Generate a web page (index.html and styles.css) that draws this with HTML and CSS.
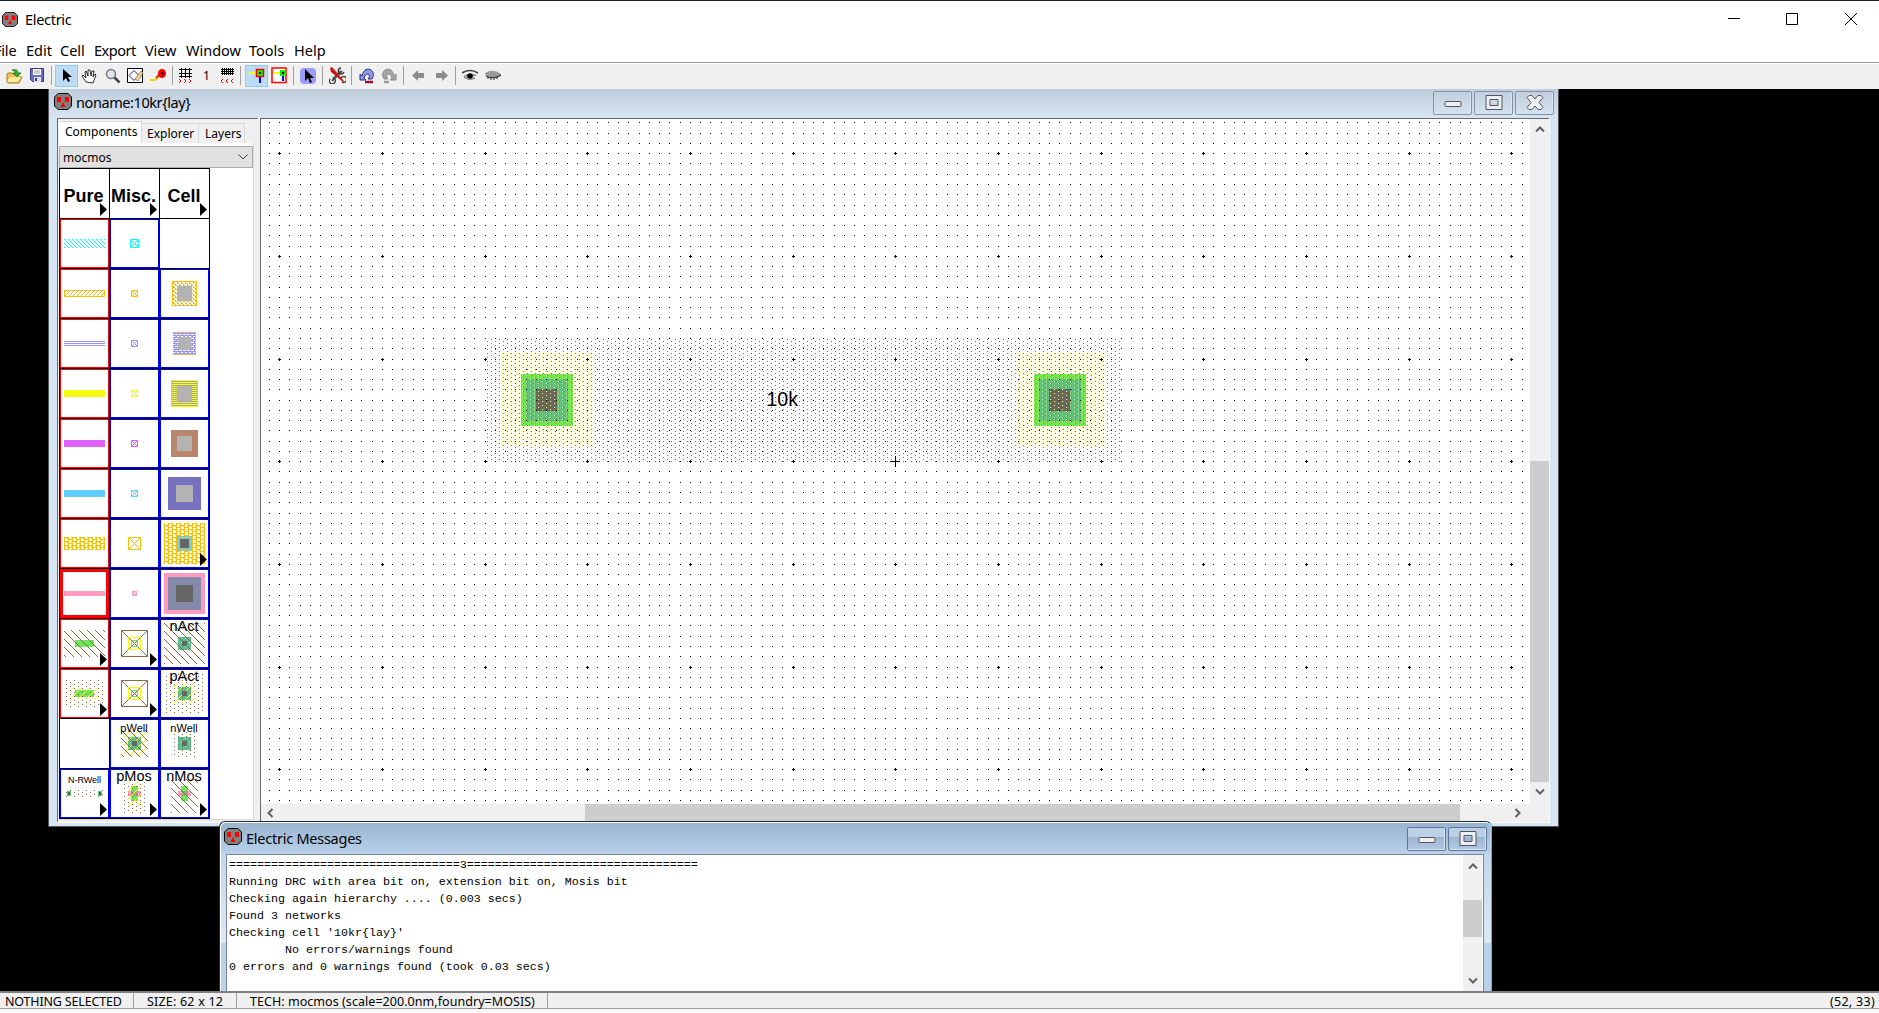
FILE: index.html
```html
<!DOCTYPE html>
<html lang="en">
<head>
<meta charset="utf-8">
<title>Electric</title>
<link rel="stylesheet" href="styles.css">
</head>
<body>
<svg class="defs" aria-hidden="true">
  <defs>
    <symbol id="logo" viewBox="0 0 18 17"><path d="M4 .5h10l3.5 3.5v9L14 16.500H4L.5 13V4z" fill="#808080" stroke="#000"/><path d="M3 4h4v5H3zM11 4h4v5h-4zM8 10h2v2h1v2H7v-2h1z" fill="#f00"/></symbol>
    <symbol id="up" viewBox="0 0 10 8"><path d="M1 6.500L5 2.500L9 6.500" fill="none" stroke="#606060" stroke-width="2"/></symbol>
    <symbol id="arrow" viewBox="0 0 7 13"><path d="M0 0l7 6.500L0 13z"/></symbol>
    <pattern id="hCyan" width="4" height="4" patternUnits="userSpaceOnUse"><path d="M0 0h1v1h1v1h1v1h1v1h-1v-1h-1v-1h-1v-1h-1z" fill="#00ffff"/></pattern>
    <pattern id="hOr" width="4" height="4" patternUnits="userSpaceOnUse"><path d="M3 0h1v1h-1v1h-1v1h-1v1h-1v-1h1v-1h1v-1h1z" fill="#ffbe06"/></pattern>
    <pattern id="chk" width="4" height="4" patternUnits="userSpaceOnUse"><path d="M0 0h1v1h-1zM2 2h1v1h-1zM3 0h1v1h-1zM1 2h1v1h-1z" fill="#ffbe06"/><path d="M1 1h1v1h-1zM3 3h1v1h-1z" fill="#2ee8d8"/></pattern>
    <pattern id="brk" width="4" height="4" patternUnits="userSpaceOnUse"><path d="M0 0h4v1h-4zM0 2h4v1h-4zM0 1h1v1h-1zM2 3h1v1h-1z" fill="#9696ff"/><path d="M3 1h1v1h-1z" fill="#ffbe06"/></pattern>
    <pattern id="tile" x="4" y="2" width="8" height="4" patternUnits="userSpaceOnUse"><path d="M0 0h1v4H0zM4 0h1v4H4zM0 0h4v1H0zM4 2h4v1H4zM3 1h1v1h-1zM7 0h1v1h-1z" fill="#ffbe06"/></pattern>
    <pattern id="hBr" width="8" height="8" patternUnits="userSpaceOnUse"><path d="M0 0h1v1h1v1h1v1h1v1h1v1h1v1h1v1h1v1h-1v-1h-1v-1h-1v-1h-1v-1h-1v-1h-1v-1h-1v-1h-1z" fill="#8b6a43"/></pattern>
    <pattern id="hYe" width="8" height="8" patternUnits="userSpaceOnUse"><path d="M7 0h1v1h-1v1h-1v1h-1v1h-1v1h-1v1h-1v1h-1v1h-1v-1h1v-1h1v-1h1v-1h1v-1h1v-1h1v-1h1z" fill="#ff0"/></pattern>
    <pattern id="dBr" x="2" y="1" width="8" height="4" patternUnits="userSpaceOnUse"><path d="M0 0h1v1H0zM4 2h1v1H4z" fill="#8b6a43"/></pattern>
    <pattern id="dYe" width="8" height="8" patternUnits="userSpaceOnUse"><path d="M1 3h1v1H1zM5 7h1v1H5z" fill="#ff0"/></pattern>
    <symbol id="via" viewBox="0 0 49 49"><path d="M21.500 21.500h6v6h-6z" fill="none" stroke="currentColor"/><path d="M22 22h1v1h-1zM23 23h1v1h-1zM24 24h1v1h-1zM25 25h1v1h-1zM26 26h1v1h-1zM26 22h1v1h-1zM25 23h1v1h-1zM23 25h1v1h-1zM22 26h1v1h-1z" fill="currentColor"/></symbol>
    <symbol id="act" viewBox="0 0 49 49"><g fill="none"><path d="M11.500 11.500h26v26h-26zM12 12l25 25M37 12L12 37" stroke="#8b6a43"/><path d="M18.500 18.500h12v12h-12z" stroke="#ff0"/><path d="M21.500 21.500h6v6h-6z" stroke="#6be65a"/></g></symbol>
    <symbol id="tea" viewBox="0 0 49 49"><path d="M18 18h13v13H18z" fill="#5cbf8d"/><path d="M22 22h5v5h-5z" fill="#666"/></symbol>
    <pattern id="rBr" x="226" y="220" width="8" height="4" patternUnits="userSpaceOnUse"><path d="M0 2h1v1H0zM4 0h1v1H4z" fill="#8a6a52"/></pattern>
    <pattern id="rYe" x="225" y="220" width="8" height="4" patternUnits="userSpaceOnUse"><path d="M0 2h1v1H0zM4 0h1v1H4z" fill="#ff0"/></pattern>
  </defs>
</svg>
<div class="app">
  <header class="titlebar">
    <svg class="logo" width="16" height="15"><use href="#logo"/></svg>
    <span class="app-name">Electric</span>
    <svg class="caption" width="131" height="14" fill="none" stroke="#000"><path d="M0 5.500h12M58.500.5h11v11h-11z"/><path d="M117 0l12 12M129 0L117 12"/></svg>
  </header>
  <nav class="menu"><span class="m1">File</span><span class="m2">Edit</span><span class="m3">Cell</span><span class="m4">Export</span><span class="m5">View</span><span class="m6">Window</span><span class="m7">Tools</span><span class="m8">Help</span></nav>
  <div class="toolbar">
    <i class="btn"><svg width="17" height="16"><path d="M1 14V6l1-1h4l1 1h5v3l4 0-3 6H2z" fill="#f0c25a" stroke="#a87a1c"/><path d="M4 9h11l-3 5H1z" fill="#ffe9a0"/><path d="M6 2c4-1 6 0 6 3h3l-4 4-4-4h2c0-2-1-2-3-3z" fill="#3fae29" stroke="#1c7414" stroke-width=".8"/></svg></i>
    <i class="btn"><svg width="15" height="15"><path d="M.5.5h13v13h-11l-2-2z" fill="#6a6fc0" stroke="#34387e"/><path d="M3 1h8v6H3z" fill="#fff"/><path d="M4 3h6M4 5h6" stroke="#99a"/><path d="M4 9h7v5H4z" fill="#dde"/><path d="M5 10h2v3H5z" fill="#34387e"/></svg></i>
    <b class="sep"></b>
    <i class="btn on"><svg width="12" height="17"><path d="M2 2v12l3-3 2 4 2-1-2-4h4z"/></svg></i>
    <i class="btn"><svg width="17" height="16"><path d="M5 14L1 8l1-1 3 3-1-6 1-1 2 5 0-6 2 0 1 6 1-5 2 0-1 6 2-3 1 1-3 8z" fill="#fff" stroke="#000" stroke-width=".8"/></svg></i>
    <i class="btn"><svg width="16" height="16"><circle cx="6" cy="6" r="4.500" fill="#dce6ee" stroke="#777" stroke-width="1.500"/><path d="M9.500 9.500l5 5" stroke="#444" stroke-width="2.500"/></svg></i>
    <i class="btn"><svg width="17" height="16"><path d="M.5.5h15v14H.5z" fill="#fff" stroke="#000"/><path d="M2 7.500l5-5 5 5-5 5z" fill="none" stroke="#22227c"/><path d="M8 11l6-8 2 2-5 8z" fill="#efd394" stroke="#8b6a43" stroke-width=".7"/></svg></i>
    <i class="btn"><svg width="17" height="15"><path d="M0 12h5l4-3" stroke="#e8d800" stroke-width="2" fill="none"/><path d="M6 10l4-4" stroke="#c33" stroke-width="2"/><ellipse cx="12" cy="5.500" rx="4" ry="4.500" fill="#f00"/><path d="M11 4h3v3h-3z" fill="#300"/></svg></i>
    <b class="sep narrow"></b>
    <i class="btn small"><svg width="15" height="16"><path d="M1 1.500h13M1 5.500h13M1 8.500h13M3.500 0v10M7.500 0v10M11.500 0v10" stroke="#000"/><path d="M1 11l2 2-2 2M6 11l2 2-2 2M11 11l2 2-2 2" stroke="#f00" fill="none"/></svg></i>
    <i class="btn small one">1</i>
    <i class="btn small"><svg width="15" height="16"><path d="M1 1.500h13M1 3.500h13M1 5.500h13M2.500 0v7M4.500 0v7M6.500 0v7M8.500 0v7M10.500 0v7M12.500 0v7" stroke="#000"/><path d="M3 11l-2 2 2 2M8 11l-2 2 2 2M13 11l-2 2 2 2" stroke="#f00" fill="none"/></svg></i>
    <b class="sep wide"></b>
    <i class="btn on"><svg width="16" height="16"><path d="M0 5h7" stroke="#ff0" stroke-width="2"/><path d="M11 9v6" stroke="#00f" stroke-width="2"/><path d="M7.500 1.500h7v7h-7z" fill="#0f0" stroke="#f00" stroke-width="1.500"/><path d="M10 4h2v2h-2z"/></svg></i>
    <i class="btn"><svg width="17" height="17"><path d="M1 1h14v14.500H1z" fill="#fff" stroke="#f00" stroke-width="1.500"/><path d="M2 6h7" stroke="#ff0" stroke-width="2"/><path d="M12 8v6" stroke="#00f" stroke-width="2"/><path d="M9 3h6v6H9z" fill="#0e0"/><path d="M11 5h2v2h-2z"/></svg></i>
    <b class="sep"></b>
    <i class="btn"><svg width="17" height="16"><rect width="16" height="16" rx="4" fill="#9a9cf8"/><path d="M5 1v12l3-3 2 5 2-1-2-4h4z"/></svg></i>
    <b class="sep"></b>
    <i class="btn"><svg width="17" height="17"><path d="M3 14L13 4M4 12l8-8" stroke="#555" stroke-width="2"/><path d="M1 12a3 3 0 1 0 3-1M12 1a3 3 0 1 0 3 4M12 11a3 3 0 1 1 1 4" fill="none" stroke="#333" stroke-width="1.300"/><path d="M1 1l2-1 6 7 6 7-1 1-7-6-5-4z" fill="#d01010"/></svg></i>
    <b class="sep"></b>
    <i class="btn"><svg width="16" height="16"><path d="M1 6v6h6L5 10c1-4 4-5 5-3 1 1 0 3-1 4h4c2-3 2-8-2-9.500C7 0 4 3 3 8z" fill="#8d98e6" stroke="#2a3278"/><path d="M6 14h8" stroke="#a01030" stroke-width="2.500"/></svg></i>
    <i class="btn"><svg width="16" height="16"><path d="M14 6v6H8l2-2C9 6 6 5 5 7c-1 1 0 3 1 4H2C0 8 0 3 4 1.500 8 0 11 3 12 8z" fill="#a4a4a4" stroke="#8a8a8a"/><path d="M2 14h5" stroke="#999" stroke-width="2.500"/></svg></i>
    <b class="sep"></b>
    <i class="btn"><svg width="13" height="13"><path d="M0 6.500L6 1v3h6v5H6v3z" fill="#8c8c8c"/></svg></i>
    <i class="btn"><svg width="13" height="13"><path d="M13 6.500L7 1v3H1v5h6v3z" fill="#8c8c8c"/></svg></i>
    <b class="sep"></b>
    <i class="btn"><svg width="17" height="13"><path d="M0 4q8-5 16 0" fill="none" stroke="#444" stroke-width="1.500"/><path d="M1 7q7-4 14-1-6 5-14 1z" fill="#999"/><circle cx="8" cy="7" r="2.800"/><path d="M2 8q5 4 11 1" fill="none" stroke="#555"/></svg></i>
    <i class="btn"><svg width="17" height="13"><path d="M0 4q8-5 16 1v2q-8 4-15 0z" fill="#999"/><path d="M1 7q7 4 15-1M3 8v2M6 9v2M9 9v2M12 8v2" fill="none" stroke="#222"/></svg></i>
  </div>

  <main class="desktop">
    <section class="win cell-win">
      <div class="win-title">
        <svg class="logo" width="18" height="17"><use href="#logo"/></svg>
        <span class="t1">noname:10kr{lay}</span>
        <div class="wbtns">
          <i class="wb"><svg width="18" height="16"><rect x="1" y="6.500" width="16" height="5" rx="1" fill="#eee" stroke="#535666"/></svg></i>
          <i class="wb"><svg width="18" height="16"><path d="M1 .5h16v14H1zM5 4.500v6h8v-6z" fill="#eee" fill-rule="evenodd" stroke="#535666"/></svg></i>
          <i class="wb"><svg width="18" height="16"><path d="M3 .5h3L9 4l3-3.500h3l2 2L13 7.500l4 5-2 2h-3L9 11l-3 3.500H3l-2-2 4-5-4-5z" fill="#eee" stroke="#535666"/></svg></i>
        </div>
      </div>
      <div class="win-body">
        <aside class="side">
          <div class="tabs"><span class="tab cur">Components</span><span class="tab ex">Explorer</span><span class="tab ly">Layers</span></div>
          <div class="pane">
            <div class="combo"><span>mocmos</span><svg width="10" height="6"><path d="M.5.5L5 5 9.500.5" fill="none" stroke="#444"/></svg></div>
            <div class="palette">
              <div class="c head"><svg viewBox="0 0 49 49"><text x="23.500" y="33">Pure</text><use href="#arrow" x="40" y="34" width="7" height="13"/></svg></div>
              <div class="c head"><svg viewBox="0 0 49 49"><text x="23.500" y="33">Misc.</text><use href="#arrow" x="40" y="34" width="7" height="13"/></svg></div>
              <div class="c head"><svg viewBox="0 0 49 49"><text x="24" y="33">Cell</text><use href="#arrow" x="40" y="34" width="7" height="13"/></svg></div>

              <div class="c r"><svg viewBox="0 0 49 49"><path d="M4 20h41v9H4z" fill="url(#hCyan)"/></svg></div>
              <div class="c b"><svg viewBox="0 0 49 49"><path d="M20.500 20.500h8v8h-8zM21 21l7 7M28 21l-7 7" fill="none" stroke="#0ff"/></svg></div>
              <div class="c"></div>

              <div class="c r"><svg viewBox="0 0 49 49"><path d="M4.500 21.500h40v6h-40z" fill="url(#hOr)" stroke="#ffbe06"/></svg></div>
              <div class="c b"><svg viewBox="0 0 49 49" color="#ffbe06"><use href="#via"/></svg></div>
              <div class="c b"><svg viewBox="0 0 49 49"><path d="M12.500 12.500h24v24h-24z" fill="url(#chk)" stroke="#ffbe06"/><path d="M17 17h15v15H17z" fill="#b3b3b3"/></svg></div>

              <div class="c r"><svg viewBox="0 0 49 49"><path d="M4 22.500h41M4 24.500h41M4 26.500h41" stroke="#9696ff"/></svg></div>
              <div class="c b"><svg viewBox="0 0 49 49" color="#9696ff"><use href="#via"/></svg></div>
              <div class="c b"><svg viewBox="0 0 49 49"><path d="M13 13h23v23H13z" fill="url(#brk)"/><path d="M13 13.500h23M13 35.500h23" stroke="#ecb568"/><path d="M18 18h13v13H18z" fill="#b3b3b3"/></svg></div>

              <div class="c r"><svg viewBox="0 0 49 49"><path d="M4 21h41v7H4z" fill="#f7fb14"/></svg></div>
              <div class="c b"><svg viewBox="0 0 49 49" color="#f7fb14"><use href="#via"/></svg></div>
              <div class="c b"><svg viewBox="0 0 49 49"><path d="M11 11h27v27H11z" fill="#a9a9a0"/><path d="M24.500 11v27" stroke="#f7fb14" stroke-width="27" stroke-dasharray="1 1"/><path d="M17 17h15v15H17z" fill="#b3b3b3"/></svg></div>

              <div class="c r"><svg viewBox="0 0 49 49"><path d="M4 21h41v7H4z" fill="#e05fff"/></svg></div>
              <div class="c b"><svg viewBox="0 0 49 49" color="#e05fff"><use href="#via"/></svg></div>
              <div class="c b"><svg viewBox="0 0 49 49"><path d="M11 11h27v27H11z" fill="#b9866c"/><path d="M17 17h15v15H17z" fill="#b3b3b3"/></svg></div>

              <div class="c r"><svg viewBox="0 0 49 49"><path d="M4 21h41v7H4z" fill="#5fceff"/></svg></div>
              <div class="c b"><svg viewBox="0 0 49 49" color="#5fceff"><use href="#via"/></svg></div>
              <div class="c b"><svg viewBox="0 0 49 49"><path d="M8 8h33v33H8z" fill="#7672c0"/><path d="M16 16h17v17H16z" fill="#b3b3b3"/></svg></div>

              <div class="c r"><svg viewBox="0 0 49 49"><path d="M4 18h41v13H4z" fill="url(#tile)"/></svg></div>
              <div class="c b"><svg viewBox="0 0 49 49"><path d="M18.500 18.500h12v12h-12zM19 19l11 11M30 19L19 30" fill="none" stroke="#ffbe06"/></svg></div>
              <div class="c b"><svg viewBox="0 0 49 49"><path d="M4 4h41v41H4z" fill="url(#tile)"/><path d="M17 17h15v15H17z" fill="#5fceff"/><path d="M17 17h15v15H17z" fill="url(#tile)" opacity=".6"/><path d="M20 20h9v9h-9z" fill="#666"/><use href="#arrow" x="40" y="34" width="7" height="13"/></svg></div>

              <div class="c r sel"><svg viewBox="0 0 49 49"><path d="M4 22h41v5H4z" fill="#ff9bc0"/></svg></div>
              <div class="c b"><svg viewBox="0 0 49 49"><path d="M22 22h5v5h-5z" fill="#ff9bc0"/><path d="M24 23h1v1h-1zM23 24h1v1h-1zM25 24h1v1h-1zM24 25h1v1h-1z" fill="#fff"/></svg></div>
              <div class="c b"><svg viewBox="0 0 49 49"><path d="M4 4h41v41H4z" fill="#ff9bc0"/><path d="M8 8h33v33H8z" fill="#858aaa"/><path d="M16 16h17v17H16z" fill="#666"/></svg></div>

              <div class="c r"><svg viewBox="0 0 49 49"><path d="M15 21h19v7H15z" fill="#6be65a"/><path d="M4 11h41v27H4z" fill="url(#hBr)"/><path d="M11 18h27v13H11z" fill="url(#dYe)"/><use href="#arrow" x="40" y="34" width="7" height="13"/></svg></div>
              <div class="c b"><svg viewBox="0 0 49 49"><use href="#act"/><use href="#arrow" x="40" y="34" width="7" height="13"/></svg></div>
              <div class="c b"><svg viewBox="0 0 49 49"><use href="#tea"/><path d="M4 4h41v41H4z" fill="url(#hBr)"/><path d="M15 15h19v19H15z" fill="url(#dYe)"/><path d="M22 22h5v5h-5z" fill="#666"/><text class="l" x="24" y="12">nAct</text></svg></div>

              <div class="c r"><svg viewBox="0 0 49 49"><path d="M15 21h19v7H15z" fill="#6be65a"/><path d="M6 11h38v27H6z" fill="url(#dBr)"/><path d="M11 18h27v13H11z" fill="url(#hYe)"/><use href="#arrow" x="40" y="34" width="7" height="13"/></svg></div>
              <div class="c b"><svg viewBox="0 0 49 49"><use href="#act"/><use href="#arrow" x="40" y="34" width="7" height="13"/></svg></div>
              <div class="c b"><svg viewBox="0 0 49 49"><use href="#tea"/><path d="M5 5h39v40H5z" fill="url(#dBr)"/><path d="M14 14h21v21H14z" fill="url(#hYe)"/><path d="M22 22h5v5h-5z" fill="#666"/><text class="l" x="24" y="12">pAct</text></svg></div>

              <div class="c"></div>
              <div class="c b"><svg viewBox="0 0 49 49"><use href="#tea"/><path d="M11 11h27v27H11z" fill="url(#hBr)"/><path d="M13 13h23v23H13z" fill="url(#hYe)"/><path d="M22 22h5v5h-5z" fill="#666"/><text class="m" x="24" y="13">pWell</text></svg></div>
              <div class="c b"><svg viewBox="0 0 49 49"><use href="#tea"/><path d="M13 13h23v25H13z" fill="url(#dBr)"/><path d="M15 15h19v19H15z" fill="url(#dYe)"/><path d="M22 22h5v5h-5z" fill="#666"/><text class="m" x="24" y="13">nWell</text></svg></div>

              <div class="c b"><svg viewBox="0 0 49 49"><path d="M6 21h38v8H6z" fill="url(#dBr)"/><path d="M7 22h4v5H7zM38 22h4v5h-4z" fill="#5fd070"/><path d="M8 23h2v3H8zM39 23h2v3h-2z" fill="#555"/><text class="s" x="24.500" y="14">N-RWell</text><use href="#arrow" x="40" y="34" width="7" height="13"/></svg></div>
              <div class="c b"><svg viewBox="0 0 49 49"><path d="M21 17h7v15h-7z" fill="#6be65a"/><path d="M18 22h13v5H18z" fill="#ff9bc0"/><path d="M21 22h7v5h-7z" fill="#8fb07a"/><path d="M13 10h23v34H13z" fill="url(#dBr)"/><path d="M17 12h15v25H17z" fill="url(#hYe)"/><text class="l" x="24" y="12">pMos</text><use href="#arrow" x="40" y="34" width="7" height="13"/></svg></div>
              <div class="c b"><svg viewBox="0 0 49 49"><path d="M21 17h7v15h-7z" fill="#6be65a"/><path d="M18 22h13v5H18z" fill="#ff9bc0"/><path d="M21 22h7v5h-7z" fill="#8fb07a"/><path d="M11 10h27v34H11z" fill="url(#hBr)"/><path d="M18 14h13v21H18z" fill="url(#dYe)"/><text class="l" x="24" y="12">nMos</text><use href="#arrow" x="40" y="34" width="7" height="13"/></svg></div>
            </div>
          </div>
        </aside>
        <div class="editor">
          <svg class="canvas" width="1269" height="685">
            <path d="M225 220h635v124H225z" fill="url(#rBr)"/>
            <path d="M238 234h95v93h-95zM754 234h91v93h-91z" fill="url(#rYe)"/>
            <path d="M260 255h52v52h-52zM773 255h52v52h-52z" fill="#6be65a"/>
            <path d="M265 260h42v42h-42zM778 260h42v42h-42z" fill="#5cbf8d"/>
            <path d="M275 270h21v22h-21zM788 270h21v22h-21z" fill="#666"/>
            <path d="M260 255h52v52h-52zM773 255h52v52h-52z" fill="url(#rBr)"/>
            <path d="M260 255h52v52h-52zM773 255h52v52h-52z" fill="url(#rYe)"/>
            <path id="grid"/>
            <path d="M629 342.500h10M634.500 337v11" stroke="#000"/>
            <text x="505.500" y="287">10k</text>
          </svg>
          <div class="vbar"><svg width="10" height="8"><use href="#up"/></svg><b></b><svg class="dn" width="10" height="8"><use href="#up"/></svg></div>
          <div class="hbar"><svg class="lf" width="10" height="8"><use href="#up"/></svg><b></b><svg class="rt" width="10" height="8"><use href="#up"/></svg></div>
        </div>
      </div>
    </section>

    <section class="win msg-win">
      <div class="win-title">
        <svg class="logo" width="18" height="17"><use href="#logo"/></svg>
        <span class="t2">Electric Messages</span>
        <div class="wbtns">
          <i class="wb"><svg width="18" height="16"><rect x="1" y="6.500" width="16" height="5" rx="1" fill="#eee" stroke="#535666"/></svg></i>
          <i class="wb"><svg width="18" height="16"><path d="M1 .5h16v14H1zM5 4.500v6h8v-6z" fill="#eee" fill-rule="evenodd" stroke="#535666"/></svg></i>
        </div>
      </div>
      <div class="msg-body">
<pre>=================================3=================================
Running DRC with area bit on, extension bit on, Mosis bit
Checking again hierarchy .... (0.003 secs)
Found 3 networks
Checking cell '10kr{lay}'
        No errors/warnings found
0 errors and 0 warnings found (took 0.03 secs)</pre>
        <div class="vbar"><svg width="10" height="8"><use href="#up"/></svg><b></b><svg class="dn" width="10" height="8"><use href="#up"/></svg></div>
      </div>
    </section>
  </main>
  <footer class="status"><span class="s1">NOTHING SELECTED</span><span class="s2">SIZE: 62 x 12</span><span class="s3">TECH: mocmos (scale=200.0nm,foundry=MOSIS)</span><span class="s4">(52, 33)</span></footer>
</div>
<script src="grid.js"></script>
</body>
</html>
```
FILE: grid.js
```js
// Dot grid of the layout editor: a dot per unit, a bold one every ten units.
(function () {
  var step = 10.267, d = '';
  for (var j = -3; j <= 63; j++) {
    var y = Math.round(34.2 + j * step);
    if (y > 683) break;
    for (var i = -1; i <= 121; i++) {
      var x = Math.round(18.2 + i * step);
      d += 'M' + x + ' ' + y + 'h1v1h-1z';
      if (i % 10 === 0 && j % 10 === 0) {
        d += 'M' + (x - 1) + ' ' + y + 'h3v1h-3zM' + x + ' ' + (y - 1) + 'h1v3h-1z';
      }
    }
  }
  document.getElementById('grid').setAttribute('d', d);
})();
```
FILE: styles.css
```css
* { box-sizing: border-box; }
body { margin: 0; overflow: hidden; font-family: "Noto Sans", sans-serif; color: #000; }
svg { display: block; flex: none; }
.defs { position: absolute; width: 0; height: 0; }
.app { display: flex; flex-direction: column; width: 1879px; height: 1013px; background: #fff; }

.titlebar { height: 38px; border-top: 1px solid #17212e; display: flex; align-items: flex-start; padding: 11px 20px 0 2px; }
.app-name { font-size: 14.5px; line-height: 18px; margin: -2px auto 0 7px; letter-spacing: -0.3px; }
.caption { margin: 1px 0 0; }
.menu { height: 24px; display: flex; font-size: 14.5px; line-height: 25px; white-space: nowrap; }
.menu span { flex: none; }
.m1 { width: 32px; margin-left: -6px; letter-spacing: -.2px; }
.m2 { width: 34px; }
.m3 { width: 34px; }
.m4 { width: 51px; letter-spacing: -.5px; }
.m5 { width: 41px; letter-spacing: -.1px; }
.m6 { width: 63px; }
.m7 { width: 45px; }

.toolbar { height: 27px; border-top: 1px solid #a0a0a0; background: #f0f0f0; display: flex; align-items: center; padding: 0 0 1px 3px; box-shadow: inset 0 1px #fff; }
.btn { width: 23px; height: 22px; display: flex; align-items: center; justify-content: center; font-style: normal; flex: none; }
.btn.on { background: #bcdcf4; border: 1px solid #90c8f6; }
.btn.small { width: 21px; }
.btn.one { font: 12px "Noto Sans", sans-serif; }
.sep { width: 6px; height: 19px; flex: none; background: linear-gradient(#a0a0a0, #a0a0a0) 2px 0 / 1px 100% no-repeat; }
.sep.narrow { width: 5px; }
.sep.wide { width: 7px; }

.desktop { height: 902px; position: relative; overflow: hidden; background: #000; }
.win { position: absolute; display: flex; flex-direction: column; }
.cell-win { left: 48px; top: 0; width: 1511px; height: 738px; background: #d7e4f2; border: 1px solid #50555c; border-top: 0; padding: 0 8px 4px 8px; }
.cell-win .win-title { height: 29px; margin: 0 -8px; padding: 2px 4px 0 5px; background: linear-gradient(#bfcddb, #d7e4f2); }
.win-title { display: flex; align-items: flex-start; flex: none; }
.win-title .logo { margin-top: 2px; }
.win-title span { font-size: 14.5px; line-height: 22px; margin-left: 4px; margin-right: auto; white-space: nowrap; letter-spacing: -.25px; }
.win-title .t1 { letter-spacing: -.42px; }
.wbtns { display: flex; gap: 2px; }
.wb { width: 39px; height: 24px; border: 1px solid #8391aa; border-radius: 2px; display: flex; align-items: center; justify-content: center; box-shadow: inset -1px -1px #d7e4f2; }
.win-body { flex: 1; display: flex; gap: 2px; background: #f0f0f0; border-right: 1px solid #fff; border-bottom: 1px solid #fff; }
.side { width: 201px; border-left: 1px solid #696969; border-top: 1px solid #696969; padding: 2px 4px 2px 1px; display: flex; flex-direction: column; }
.tabs { height: 22px; display: flex; align-items: flex-end; font-size: 12px; }
.tab { height: 20px; line-height: 19px; border: 1px solid #d9d9d9; border-bottom: 0; border-left: 0; white-space: nowrap; }
.tab.cur { width: 83px; height: 22px; line-height: 19px; background: #fff; padding-left: 6px; }
.tab.ex { width: 57px; padding-left: 5px; }
.tab.ly { width: 46px; padding-left: 6px; }
.pane { flex: 1; background: #fff; border-right: 1px solid #d9d9d9; border-bottom: 1px solid #d9d9d9; padding-top: 3px; }
.combo { width: 194px; height: 22px; background: #e1e1e1; border: 1px solid #adadad; display: flex; align-items: center; justify-content: space-between; padding: 0 4px 0 3px; font-size: 12px; }
.palette { width: 151px; background: #000; display: grid; grid-template-columns: repeat(3, 49px); grid-auto-rows: 49px; gap: 1px; padding: 1px; }
.c { background: #fff; position: relative; }
.c svg { width: 49px; height: 49px; }
.c.r::after, .c.b::after { content: ""; position: absolute; inset: 0; border: 1px solid #f00; }
.c.b::after { border-color: #00f; }
.c.sel::after { border-width: 3px; }
.c text { font-family: "Liberation Sans", sans-serif; font-size: 14.5px; text-anchor: middle; }
.c.head text { font-size: 18px; font-weight: bold; }
.c text.m { font-size: 11px; }
.c text.s { font-size: 9px; }

.editor { width: 1290px; border-left: 1px solid #696969; border-top: 1px solid #696969; display: grid; grid-template-columns: 1269px 19px; grid-template-rows: 685px 17px; }
.canvas { background: #fff; shape-rendering: crispEdges; }
.canvas text { font: 19.5px "Liberation Sans", sans-serif; }
.vbar, .hbar { background: #f0f0f0; display: flex; align-items: center; }
.vbar { flex-direction: column; padding: 6px 0 8px; }
.vbar b, .hbar b { background: #cdcdcd; flex: none; }
.vbar b { width: 19px; height: 321px; margin: 328px 0 6px; }
.hbar { padding-left: 4px; }
.hbar b { width: 875px; height: 17px; margin: 0 53px 0 310px; }
.dn { transform: rotate(180deg); }
.lf { transform: rotate(-90deg); }
.rt { transform: rotate(90deg); }

.msg-win { left: 219px; top: 732px; width: 1273px; height: 200px; border: 1px solid #202830; border-right-color: #35c8f0; border-radius: 6px 6px 0 0; background: linear-gradient(#b9d1ea, #dce8f5 121px, #b9d1ea 121px); padding: 0 7px 0 6px; box-shadow: inset 1px 1px #fff; }
.msg-win .win-title { height: 31px; margin: 1px -6px 0 -5px; padding: 4px 3px 0 3px; background: linear-gradient(#99b4d1, #b9d1ea); border-radius: 5px 5px 0 0; }
.msg-win .wb { border-color: #5f7797; background: linear-gradient(#bcd0e6 40%, #9db5d2 41%, #b2c9e2); }
.msg-win .logo { margin-top: 1px; }
.msg-win .win-title span { line-height: 22px; }
.msg-body { flex: none; width: 1258px; height: 160px; border: 1px solid #7b8494; background: #fff; display: flex; justify-content: space-between; }
pre { margin: 2px 0 0 2px; font: 11.67px/17px "Liberation Mono", monospace; }
.msg-body .vbar { width: 19px; height: 138px; padding: 7px 0 6px; margin-right: 1px; }
.msg-body .vbar b { height: 37px; margin: 30px 0 40px; }

.status { height: 22px; background: #f0f0f0; border-top: 2px solid #808080; box-shadow: inset 0 -4px #f8f8f8, inset 0 -5px #a0a0a0; display: flex; font-size: 12.5px; line-height: 17px; white-space: nowrap; }
.status span { height: 16px; border-right: 1px solid #a0a0a0; }
.s1 { width: 134px; padding-left: 5px; letter-spacing: -.17px; }
.s2 { width: 103px; padding-left: 13px; letter-spacing: .2px; }
.s3 { width: 311px; padding-left: 13px; letter-spacing: .05px; }
.status .s4 { margin-left: auto; padding-right: 4px; border: 0; letter-spacing: .3px; }
```
